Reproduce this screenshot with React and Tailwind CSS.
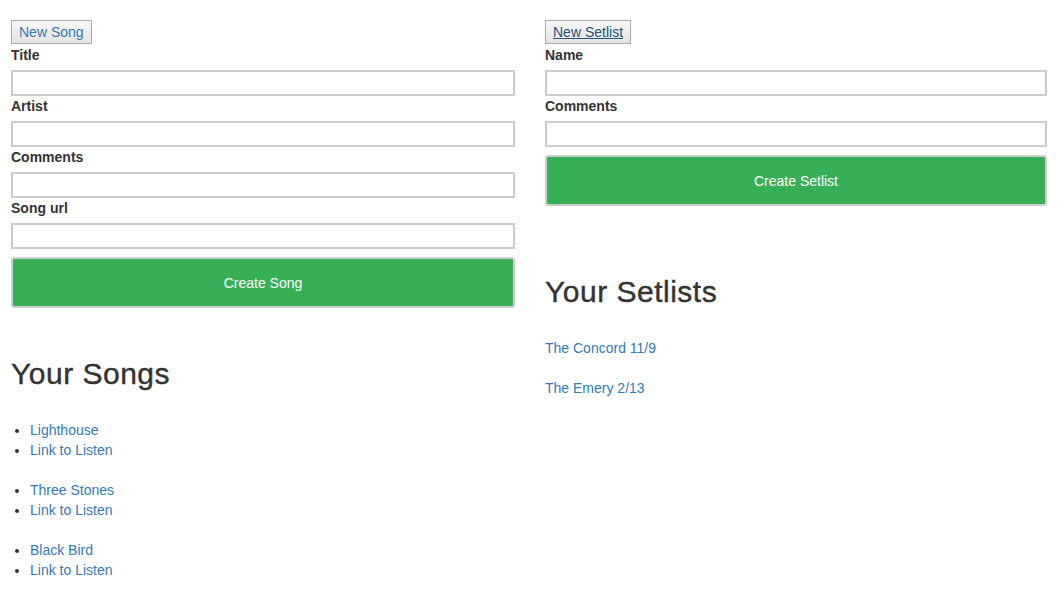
import React from 'react';

const Field = ({ label }) => (
  <div>
    <label className="block mb-[5px] text-sm leading-5 font-bold text-[#333]">{label}</label>
    <input type="text" className="block w-full h-[26px] border-2 border-[#cbcbcb] bg-white outline-none" />
  </div>
);

const TopButton = ({ children, underline }) => (
  <button
    className={`mb-px h-6 px-[7px] text-sm leading-none border border-[#a9a9a9] bg-gradient-to-b from-[#f8f8f8] to-[#e4e4e4] ${underline ? 'text-[#23527c] underline' : 'text-[#337ab7]'}`}
  >
    {children}
  </button>
);

const SubmitButton = ({ children }) => (
  <button className="mt-2 w-full h-[51px] rounded-[3px] border-2 border-[#cfcfcf] bg-[#37af57] text-white text-sm">
    {children}
  </button>
);

const songs = ['Lighthouse', 'Three Stones', 'Black Bird'];
const setlists = ['The Concord 11/9', 'The Emery 2/13'];

export default function App() {
  return (
    <div className="min-h-[594px] bg-white pl-[11px] pr-[15px] pt-5 text-[#333]" style={{ fontFamily: '"Liberation Sans", Arial, sans-serif' }}>
      <div className="grid grid-cols-[504px_1fr] gap-x-[30px]">
        {/* Songs */}
        <div>
          <TopButton>New Song</TopButton>
          <form onSubmit={e => e.preventDefault()}>
            <Field label="Title" />
            <Field label="Artist" />
            <Field label="Comments" />
            <Field label="Song url" />
            <SubmitButton>Create Song</SubmitButton>
          </form>

          <h2 className="mt-[49px] text-[30px] leading-[33px] tracking-[0.5px] font-medium text-[#333] [-webkit-text-stroke:0.4px_#333]">Your Songs</h2>
          <div className="mt-[30px]">
            {songs.map(song => (
              <ul key={song} className="list-disc pl-[19px] mb-5 text-sm leading-5 marker:text-[#333]">
                <li><a href="#" className="text-[#337ab7]">{song}</a></li>
                <li><a href="#" className="text-[#337ab7]">Link to Listen</a></li>
              </ul>
            ))}
          </div>
        </div>

        {/* Setlists */}
        <div>
          <TopButton underline>New Setlist</TopButton>
          <form onSubmit={e => e.preventDefault()}>
            <Field label="Name" />
            <Field label="Comments" />
            <SubmitButton>Create Setlist</SubmitButton>
          </form>

          <h2 className="mt-[69px] text-[30px] leading-[33px] tracking-[0.5px] font-medium text-[#333] [-webkit-text-stroke:0.4px_#333]">Your Setlists</h2>
          <div className="mt-[30px]">
            {setlists.map(s => (
              <p key={s} className="mb-5 text-sm leading-5">
                <a href="#" className="text-[#337ab7]">{s}</a>
              </p>
            ))}
          </div>
        </div>
      </div>
    </div>
  );
}
